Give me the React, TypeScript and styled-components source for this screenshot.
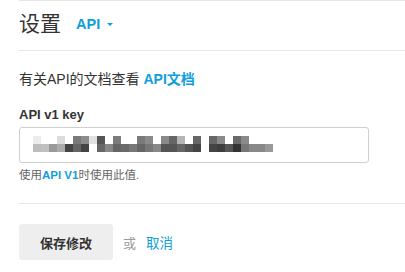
import React from "react";
import styled, { createGlobalStyle } from "styled-components";

const Global = createGlobalStyle`
  html, body { margin: 0; padding: 0; background: #fff; }
  body { font-family: "Liberation Sans", "Noto Sans CJK SC", sans-serif; color: #333; }
`;

const BLUE = "#0ea0dc";

const Page = styled.div`
  padding-left: 19px;
  width: 386px;
`;

const Header = styled.div`
  display: flex;
  align-items: center;
  gap: 15px;
  height: 51px;
  box-sizing: border-box;
  padding-bottom: 4px;
  border-top: 1px solid #e6e6e6;
  border-bottom: 1px solid #e6e6e6;
`;

const Title = styled.h1`
  margin: 0;
  font-size: 21px;
  font-weight: normal;
  color: #333;
  line-height: 24px;
`;

const Dropdown = styled.a`
  display: flex;
  align-items: center;
  gap: 7px;
  font-size: 14.5px;
  font-weight: bold;
  color: ${BLUE};
  line-height: 18px;
  text-decoration: none;
`;

const Caret = styled.span`
  width: 0;
  height: 0;
  border-left: 3.5px solid transparent;
  border-right: 3.5px solid transparent;
  border-top: 3.5px solid ${BLUE};
  margin-top: 2px;
`;

const Section = styled.div`
  padding: 18px 0 20px;
  border-bottom: 1px solid #e6e6e6;
`;

const Intro = styled.p`
  margin: 0;
  font-size: 14px;
  line-height: 20px;
  color: #333;
`;

const Link = styled.a<{ $bold?: boolean }>`
  color: ${BLUE};
  font-weight: ${(p) => (p.$bold ? "bold" : "normal")};
  text-decoration: none;
`;

const Label = styled.label`
  display: block;
  margin-top: 17px;
  font-size: 13px;
  font-weight: bold;
  line-height: 18px;
  color: #333;
`;

const Field = styled.div`
  margin-top: 3px;
  width: 350px;
  height: 36px;
  box-sizing: border-box;
  border: 1px solid #cfcfcf;
  border-radius: 3px;
  padding: 8px 13px 0;
  display: flex;
  align-items: flex-start;
`;

const Help = styled.p`
  margin: 4px 0 0;
  font-size: 11.5px;
  line-height: 16px;
  color: #666;
`;

const Footer = styled.div`
  display: flex;
  align-items: center;
  padding-top: 20px;
  font-size: 13px;
`;

const Button = styled.button`
  width: 94px;
  height: 36px;
  border: none;
  border-radius: 3px;
  background: #eeeeee;
  font-family: inherit;
  font-size: 13px;
  font-weight: bold;
  color: #333;
  padding: 0;
  cursor: pointer;
`;

const Or = styled.span`
  margin-left: 10px;
  color: #999;
  font-size: 13px;
`;

const Cancel = styled.a`
  margin-left: 10px;
  color: ${BLUE};
  font-size: 13.5px;
  text-decoration: none;
`;

const top: (string | null)[] = [
  "#ececec", null, null, "#dcdcdc", null, "#7a7a7a", "#8c8c8c", "#e0e0e0", "#555", null,
  "#7c7c7c", null, null, "#7a7a7a", "#8a8a8a", null, "#8a8a8a", "#666", "#b5b5b5", null,
  "#666", null, "#666", "#8a8a8a", null, "#6a6a6a", "#8a8a8a", null, null, null,
];
const bottom: (string | null)[] = [
  "#bdbdbd", "#c0c0c0", "#999", "#aaa", "#444", "#666", "#444", null, "#666", "#888",
  "#666", "#6a6a6a", "#777", "#666", "#777", "#888", "#555", "#555", "#666", "#555",
  "#444", null, "#444", "#3e3e3e", "#555", "#333", "#777", "#888", "#888", "#999",
];

const Mosaic = () => (
  <svg width="240" height="16" viewBox="0 0 240 16" shapeRendering="crispEdges">
    {top.map((c, i) => (c ? <rect key={"t" + i} x={i * 8} y={0} width={8} height={8} fill={c} /> : null))}
    {bottom.map((c, i) => (c ? <rect key={"b" + i} x={i * 8} y={8} width={8} height={8} fill={c} /> : null))}
  </svg>
);

export default function App() {
  return (
    <Page>
      <Global />
      <Header>
        <Title>设置</Title>
        <Dropdown href="#">
          API
          <Caret />
        </Dropdown>
      </Header>
      <Section>
        <Intro>
          有关API的文档查看 <Link $bold href="#">API文档</Link>
        </Intro>
        <Label>API v1 key</Label>
        <Field>
          <Mosaic />
        </Field>
        <Help>
          使用<Link $bold href="#">API V1</Link>时使用此值.
        </Help>
      </Section>
      <Footer>
        <Button>保存修改</Button>
        <Or>或</Or>
        <Cancel href="#">取消</Cancel>
      </Footer>
    </Page>
  );
}
